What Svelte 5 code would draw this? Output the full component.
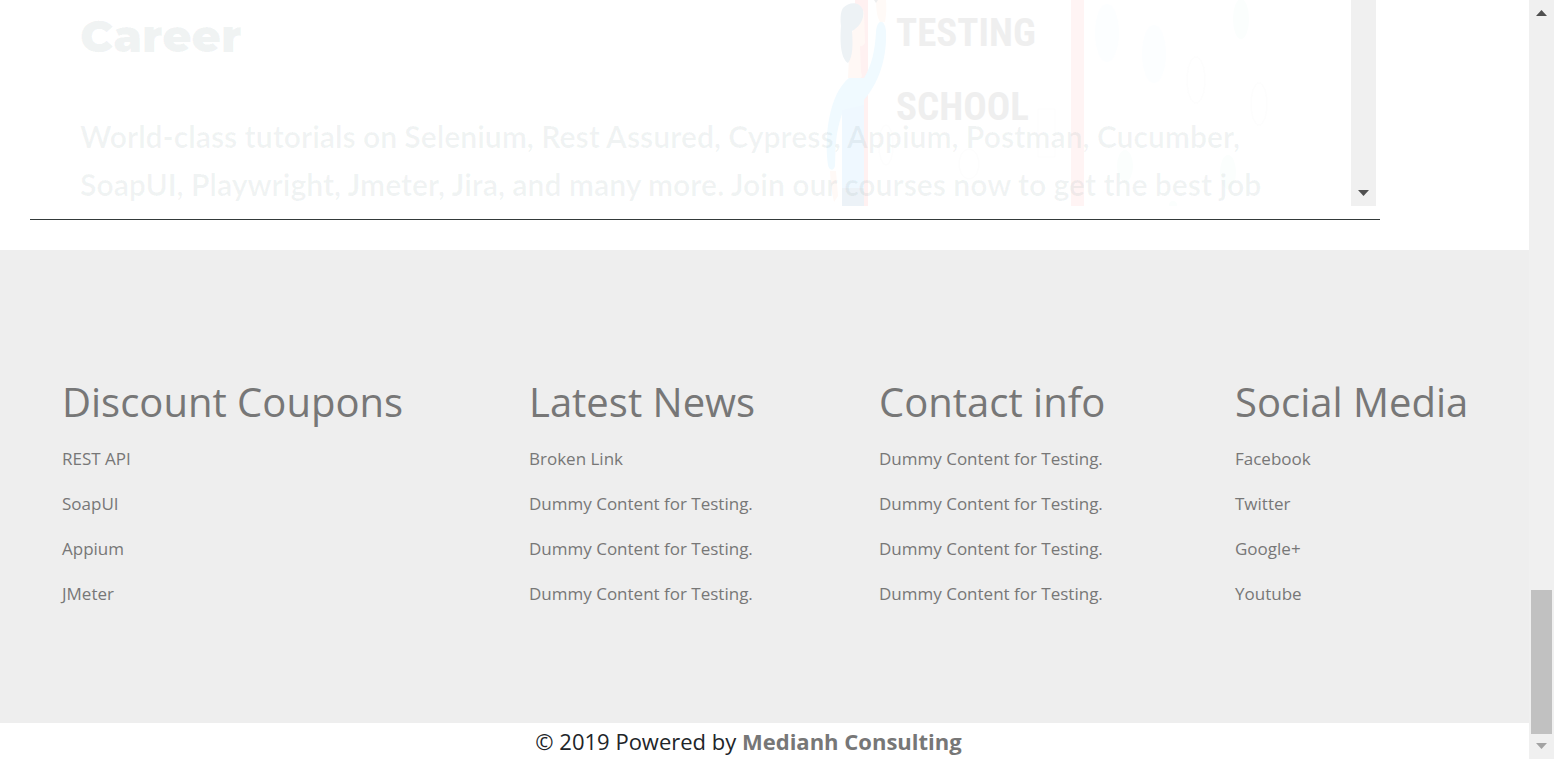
<script>
  const dummy = 'Dummy Content for Testing.';
  const columns = [
    { title: 'Discount Coupons', links: ['REST API', 'SoapUI', 'Appium', 'JMeter'] },
    { title: 'Latest News', links: ['Broken Link', dummy, dummy, dummy] },
    { title: 'Contact info', links: [dummy, dummy, dummy, dummy] },
    { title: 'Social Media', links: ['Facebook', 'Twitter', 'Google+', 'Youtube'] }
  ];
</script>

<div class="page">
  <div class="content">
    <main class="frame">
      <div class="viewport">
        <section class="hero">
          <svg class="art" width="480" height="206" viewBox="820 0 480 206" aria-hidden="true">
            <rect x="855" y="0" width="13" height="206" fill="#fff1f1" />
            <rect x="1071" y="0" width="13" height="206" fill="#fff4f4" />
            <path d="M876 0Q876 16 880 22L885 22Q887 10 886 0Z" fill="#fffaf7" />
            <path d="M874 0L878 0L876 3Z" fill="#eeeeee" />
            <path d="M850 36L864 10L865 43Q863 47 860 46L861 72Q866 82 848 78Z" fill="#fff8f5" />
            <path d="M843 8C849 2 859 1 863 10C865 20 858 28 852 31C853 44 853 57 848 63C840 58 840 39 841 26C840 16 841 11 843 8Z" fill="#edf2f5" />
            <path d="M849 78L864 78C872 65 875 50 876 32C877 18 885 19 886 31C887 55 881 80 864 100L864 190L842 190L842 114C834 138 836 153 835 166C834 171 829 171 828 165C824 136 829 94 849 78Z" fill="#f0faff" />
            <path d="M842 110L864 105L864 190L842 190Z" fill="#eff8ff" />
            <path d="M842 188L864 188L864 206L842 206Z" fill="#ecf2f7" />
            <path d="M830 171L836 171L838 196L834 202L831 188Z" fill="#fff9f6" />
            <g fill="#fcfeff">
              <ellipse cx="1107" cy="33" rx="12" ry="29" />
              <ellipse cx="1154" cy="54" rx="12" ry="29" />
            </g>
            <g fill="#fbfefd">
              <ellipse cx="1241" cy="19" rx="8" ry="20" />
              <ellipse cx="1125" cy="166" rx="8" ry="16" />
              <ellipse cx="1228" cy="172" rx="8" ry="17" />
              <ellipse cx="1173" cy="205" rx="4" ry="4" />
            </g>
            <g fill="none" stroke="#fdfdfd">
              <ellipse cx="1196" cy="80" rx="9" ry="23" />
              <ellipse cx="1259" cy="104" rx="8" ry="21" />
              <ellipse cx="886" cy="145" rx="7" ry="20" />
              <ellipse cx="969" cy="164" rx="10" ry="15" />
              <rect x="1038" y="109" width="17" height="48" />
            </g>
            <g class="board">
              <text x="896" y="46">TESTING</text>
              <text x="896" y="120">SCHOOL</text>
            </g>
          </svg>
          <h1>Career</h1>
          <p>
            World-class tutorials on Selenium, Rest Assured, Cypress, Appium, Postman, Cucumber,
            SoapUI, Playwright, Jmeter, Jira, and many more. Join our courses now to get the best job
          </p>
        </section>
        <div class="bar inner" aria-hidden="true">
          <svg width="11" height="6" viewBox="0 0 11 6"><path d="M0 0H11L5.500 6Z" fill="#505050" /></svg>
        </div>
      </div>
    </main>

    <footer>
      <div class="columns">
        {#each columns as column}
          <section>
            <h2>{column.title}</h2>
            <ul>
              {#each column.links as link}
                <li><a href="#top">{link}</a></li>
              {/each}
            </ul>
          </section>
        {/each}
      </div>
      <p class="credit">© 2019 Powered by <a href="#top">Medianh Consulting</a></p>
    </footer>
  </div>

  <div class="bar outer" aria-hidden="true">
    <svg width="11" height="6" viewBox="0 0 11 6"><path d="M0 6H11L5.500 0Z" fill="#505050" /></svg>
    <div class="track"><div class="thumb"></div></div>
    <svg width="11" height="6" viewBox="0 0 11 6"><path d="M0 0H11L5.500 6Z" fill="#a3a3a3" /></svg>
  </div>
</div>

<style>
  :global(body) {
    margin: 0;
    background: #fff;
  }

  .page {
    display: flex;
    min-height: 100vh;
    font-family: 'Trebuchet MS', 'Open Sans', sans-serif;
    color: #212529;
  }

  .content {
    flex: 1;
    min-width: 0;
  }

  .frame {
    margin: 0 149px 30px 30px;
    padding: 0 4px 13px 0;
    border-bottom: 1px solid #343a3a;
  }

  .viewport {
    display: flex;
    height: 206px;
    overflow: hidden;
  }

  .hero {
    position: relative;
    flex: 1;
    padding: 6px 80px 0 50px;
    color: rgba(30, 70, 70, 0.06);
  }

  .art {
    position: absolute;
    top: 0;
    right: 51px;
  }

  .board {
    fill: #efefef;
    font: 700 39px 'Roboto Condensed', 'Liberation Sans Narrow', Roboto, sans-serif;
  }

  h1 {
    position: relative;
    margin: 0 0 46px;
    font: 900 45px/60px Montserrat, Inter, sans-serif;
  }

  .hero p {
    position: relative;
    margin: 0;
    font: 700 30px/48px Lato, sans-serif;
  }

  .bar {
    display: flex;
    flex-direction: column;
    align-items: center;
    flex: none;
    width: 25px;
    box-sizing: border-box;
    background: #f0f0f0;
  }

  .inner {
    justify-content: flex-end;
    padding-bottom: 10px;
  }

  .outer {
    padding: 10px 0;
  }

  .track {
    display: flex;
    flex: 1;
    align-items: flex-end;
    width: 21px;
    padding-bottom: 9px;
  }

  .thumb {
    width: 100%;
    height: 20%;
    background: #c1c1c1;
  }

  .columns {
    display: grid;
    grid-template-columns: 467fr 350fr 356fr 294fr;
    padding: 128px 0 107px 62px;
    background: #eee;
    color: #777;
  }

  h2 {
    margin: 0 0 10px;
    font-size: 40px;
    font-weight: 400;
    line-height: 48px;
    white-space: nowrap;
  }

  ul {
    margin: 0;
    padding: 0;
    list-style: none;
  }

  li {
    font-size: 17px;
    font-weight: 500;
    line-height: 45px;
    white-space: nowrap;
  }

  a {
    color: inherit;
    text-decoration: none;
  }

  .credit {
    margin: 0;
    padding-right: 32px;
    font-size: 22px;
    line-height: 36px;
    text-align: center;
  }

  .credit a {
    color: #777;
    font-weight: 700;
  }
</style>
